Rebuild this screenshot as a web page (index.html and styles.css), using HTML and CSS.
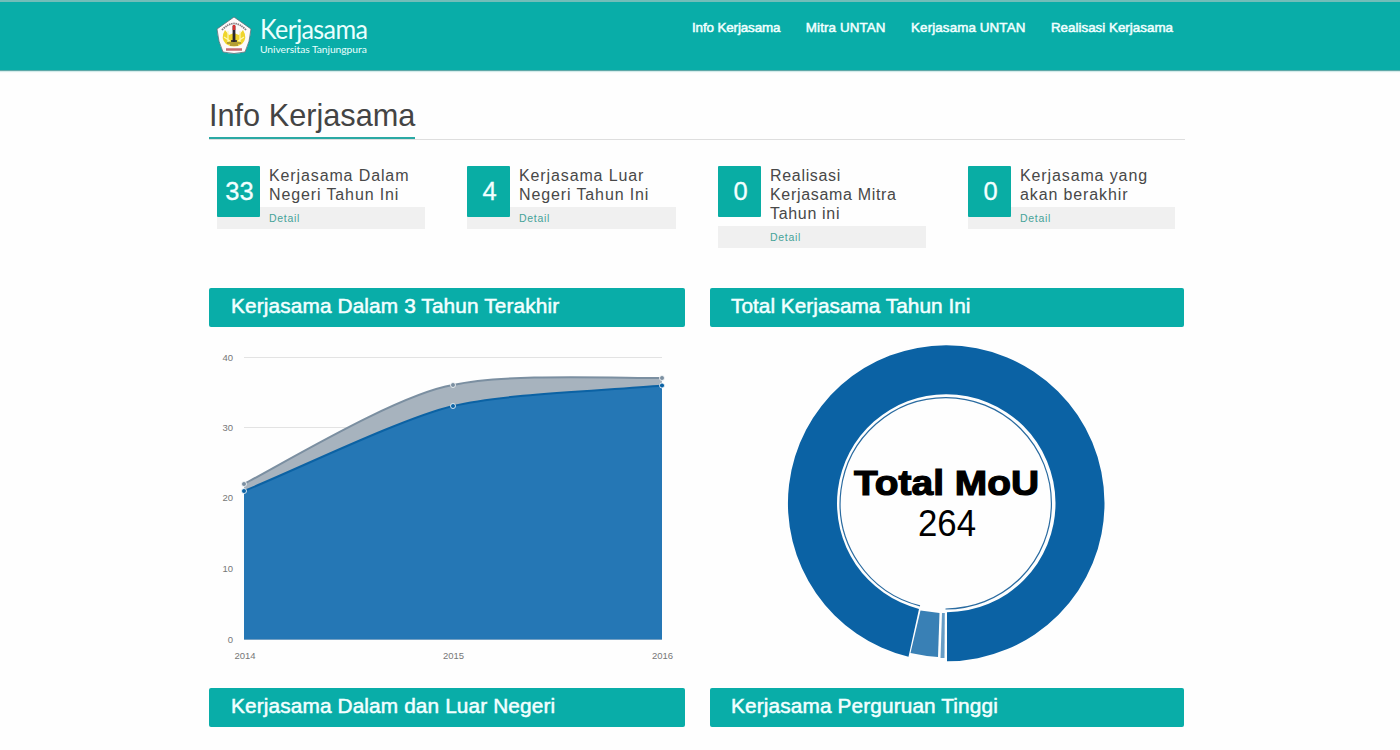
FILE: index.html
```html
<!DOCTYPE html>
<html lang="id">
<head>
<meta charset="utf-8">
<title>Kerjasama Universitas Tanjungpura</title>
<link rel="stylesheet" href="styles.css">
</head>
<body>
<header class="topbar">
  <div class="topbar-inner">
    <div class="brand">
      <svg class="crest" width="36" height="38" viewBox="0 0 36 38">
        <path d="M18 1 L35 13 Q34 26 29 36 Q18 39 7 36 Q2 26 1 13 Z" fill="#fdfafa" stroke="#5a6f78" stroke-width=".8"/>
        <path d="M6 14 Q18 1 30 14" fill="none" stroke="#857b80" stroke-width="1.8" stroke-dasharray="1.5 .7"/>
        <path d="M9 14 Q4 22 10 28 Q18 33 26 28 Q32 22 27 14 L23 19 L18 17 L13 19 Z" fill="#efd52d"/>
        <path d="M12 15v11M24 15v11M8 21l6 4M28 21l-6 4" stroke="#fff8b0" stroke-width="1.2"/>
        <path d="M11 27h14M14 29h8" stroke="#a08c37" stroke-width="1.4"/>
        <path d="M18 10v16" stroke="#29252e" stroke-width="2.8"/>
        <path d="M18 9v5" stroke="#d93030" stroke-width="2.6"/>
        <path d="M15 25h6" stroke="#29252e" stroke-width="1.6"/>
        <path d="M10 33.5h16" stroke="#c56a70" stroke-width="2.5"/>
      </svg>
      <div class="brand-text"><span class="brand-name">Kerjasama</span><span class="brand-sub">Universitas Tanjungpura</span></div>
    </div>
    <nav class="nav"><a class="snug">Info Kerjasama</a><a class="loose">Mitra UNTAN</a><a class="loose">Kerjasama UNTAN</a><a>Realisasi Kerjasama</a></nav>
  </div>
</header>
<main class="page">
  <div class="heading"><h1>Info Kerjasama</h1></div>
  <section class="stats">
    <article class="stat"><b class="count">33</b><p>Kerjasama Dalam<br>Negeri Tahun Ini</p><a class="detail">Detail</a></article>
    <article class="stat"><b class="count">4</b><p>Kerjasama Luar<br>Negeri Tahun Ini</p><a class="detail">Detail</a></article>
    <article class="stat"><b class="count">0</b><p class="tight">Realisasi<br>Kerjasama Mitra<br>Tahun ini</p><a class="detail">Detail</a></article>
    <article class="stat"><b class="count">0</b><p>Kerjasama yang<br>akan berakhir</p><a class="detail">Detail</a></article>
  </section>
  <section class="panels">
    <div class="panel">
      <h2>Kerjasama Dalam 3 Tahun Terakhir</h2>
      <svg class="chart" width="476" height="361" viewBox="209 327 476 361">
        <path d="M244 357.500H662M244 427.500H662M244 498.500H662M244 568.500H662M244 639.500H662" stroke="#e3e3e3"/>
        <path d="M244 484C296 456 401 393.500 453 385C505 373.500 610 378 662 378V639.500H244Z" fill="#a7b3be"/>
        <path d="M244 484C296 456 401 393.500 453 385C505 373.500 610 378 662 378" fill="none" stroke="#7b8fa1" stroke-width="2"/>
        <path d="M244 491C296 470 401 418.500 453 406C505 393.500 610 390.500 662 385.500V639.500H244Z" fill="#2577b5"/>
        <path d="M244 491C296 470 401 418.500 453 406C505 393.500 610 390.500 662 385.500" fill="none" stroke="#0b62a4" stroke-width="2"/>
        <g stroke="#fff" stroke-width=".8"><g fill="#7b8fa1"><circle cx="244" cy="484" r="2.5"/><circle cx="453" cy="385" r="2.5"/><circle cx="662" cy="378" r="2.5"/></g><g fill="#0b62a4"><circle cx="244" cy="491" r="2.5"/><circle cx="453" cy="406" r="2.5"/><circle cx="662" cy="385.5" r="2.5"/></g></g>
        <g class="axis" text-anchor="end"><text x="233" y="361">40</text><text x="233" y="431">30</text><text x="233" y="501">20</text><text x="233" y="572">10</text><text x="233" y="643">0</text></g>
        <g class="axis" text-anchor="middle"><text x="245" y="659">2014</text><text x="453.5" y="659">2015</text><text x="662.5" y="659">2016</text></g>
      </svg>
    </div>
    <div class="panel">
      <h2 class="even">Total Kerjasama Tahun Ini</h2>
      <svg class="chart" width="474" height="361" viewBox="710 327 474 361">
        <path d="M947 661.300A158 158 0 0 0 946 345.300A158 158 0 0 0 908.500 656.800L919 608.900A109 109 0 0 1 946 394.300A109 109 0 0 1 947 612.300Z" fill="#0b62a4"/>
        <path d="M945.500 609A105.700 105.700 0 0 0 946 397.600A105.700 105.700 0 0 0 920 605.800" fill="none" stroke="#2a6ba0" stroke-width="1.200"/>
        <path d="M920.500 610.500L939.500 613L938 657Q924 656 910.500 653Z" fill="#3980b5"/>
        <path d="M942 613H944.800L944.500 658H940.500Z" fill="#679dc6"/>
        <text class="donut-title" x="946.5" y="495" text-anchor="middle" textLength="185" lengthAdjust="spacingAndGlyphs">Total MoU</text>
        <text class="donut-value" x="947" y="536" text-anchor="middle" textLength="58" lengthAdjust="spacingAndGlyphs">264</text>
      </svg>
    </div>
    <div class="panel"><h2>Kerjasama Dalam dan Luar Negeri</h2></div>
    <div class="panel"><h2>Kerjasama Perguruan Tinggi</h2></div>
  </section>
</main>
</body>
</html>
```
FILE: styles.css
```css
* { box-sizing: border-box; }
body { margin: 0; height: 750px; overflow: hidden; background: #fefefe; font-family: "Liberation Sans", Arial, sans-serif; }
.topbar { height: 71px; background: #09ada8; border-top: 2px solid #72bdb9; border-bottom: 1px solid #5fa9a8; box-shadow: 0 1px 1px #d5eceb; }
.topbar-inner { width: 975px; margin-left: 209px; display: flex; justify-content: space-between; padding: 0 11px 0 7px; }
.brand { display: flex; gap: 8px; padding-top: 14px; }
.brand-text { display: flex; flex-direction: column; color: #eafffe; font-family: Lato, sans-serif; white-space: nowrap; }
.brand-name { font-size: 27px; line-height: 28px; letter-spacing: -.7px; margin-top: -1px; transform: scaleX(.93); transform-origin: left; }
.brand-sub { font-size: 10.3px; line-height: 12px; letter-spacing: -.05px; }
.nav { display: flex; gap: 25.5px; padding-top: 18px; color: #f1ffff; font-size: 13.4px; line-height: 16px; white-space: nowrap; -webkit-text-stroke: .5px #f1ffff; }
.nav .snug { letter-spacing: -.12px; }
.nav .loose { letter-spacing: .1px; }
.page { width: 976px; margin-left: 209px; }
.heading { height: 69px; border-bottom: 1px solid #dedede; display: flex; align-items: flex-end; }
h1 { margin: 0; height: 40px; border-bottom: 2px solid #2aa9a4; color: #444; font-size: 30.7px; line-height: 34px; font-weight: 400; white-space: nowrap; }
.stats { display: grid; grid-template-columns: 208px 209px 208px 207px; gap: 42px; padding: 26px 0 0 8px; height: 148px; align-items: start; }
.stat { display: grid; grid-template-columns: 43px 1fr; column-gap: 9px; }
.count { grid-column: 1; grid-row: 1 / 3; z-index: 1; width: 43px; height: 51px; border-radius: 1px; background: #09ada4; color: #f3ffff; font-size: 25.5px; font-weight: 400; line-height: 51px; text-align: center; padding-left: 2px; -webkit-text-stroke: .3px #f3ffff; }
.stat p { grid-column: 2; grid-row: 1; margin: 0; padding: 0 0 3px; color: #484848; font-size: 16px; line-height: 19px; letter-spacing: .88px; white-space: nowrap; }
.stat .tight { letter-spacing: .68px; }
.detail { grid-column: 1 / 3; grid-row: 2; height: 22px; background: #f0f0f0; color: #46a399; font-size: 10.5px; line-height: 22px; padding-left: 52px; letter-spacing: .7px; }
.panels { display: grid; grid-template-columns: 476px 474px; column-gap: 25px; }
h2 { margin: 0; height: 39px; border-radius: 2px; background: #09ada8; color: #f2ffff; font-size: 20.8px; line-height: 36px; font-weight: 400; letter-spacing: .13px; padding-left: 22px; white-space: nowrap; -webkit-text-stroke: .5px #f2ffff; }
h2.even { letter-spacing: .02px; }
.panel:nth-child(even) h2 { padding-left: 21px; }
.chart { display: block; }
.axis { font-size: 9.5px; fill: #777; }
.donut-title { font-weight: 700; font-size: 34.5px; fill: #000; stroke: #000; stroke-width: 1.2px; }
.donut-value { font-size: 36px; fill: #000; }
```
